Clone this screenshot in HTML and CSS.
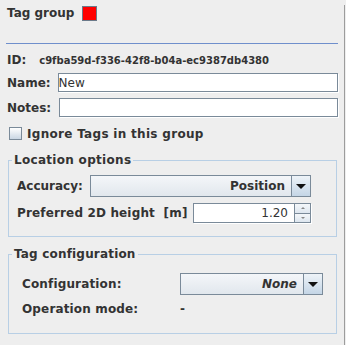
FILE: index.html
```html
<!DOCTYPE html>
<html lang="en">
<head>
  <meta charset="UTF-8">
  <title>Tag group</title>
  <link rel="stylesheet" href="styles.css">
</head>
<body>
<div class="panel">
  <div class="head">
    <span>Tag group</span>
    <span class="swatch"></span>
  </div>
  <div class="sep"></div>

  <div class="id-row">
    <span>ID:</span>
    <span class="uuid">c9fba59d-f336-42f8-b04a-ec9387db4380</span>
  </div>

  <div class="field-row name-row">
    <label for="name">Name:</label>
    <input id="name" class="text" type="text" value="New">
  </div>
  <div class="field-row notes-row">
    <label for="notes">Notes:</label>
    <input id="notes" class="text" type="text">
  </div>

  <label class="check"><span class="box"></span>Ignore Tags in this group</label>

  <fieldset class="group location">
    <legend>Location options</legend>
    <div class="group-body">
      <div class="opt-row">
        <span>Accuracy:</span>
        <div class="combo accuracy">
          <span class="combo-value">Position</span>
          <span class="combo-btn"><span class="arrow"></span></span>
        </div>
      </div>
      <div class="opt-row height-row">
        <span class="wide">Preferred 2D height&nbsp; [m]</span>
        <div class="spinner">
          <span class="spin-value">1.20</span>
          <span class="spin-btns">
            <span class="spin-up"><span class="tiny up"></span></span>
            <span class="spin-down"><span class="tiny down"></span></span>
          </span>
        </div>
      </div>
    </div>
  </fieldset>

  <fieldset class="group tagconf">
    <legend>Tag configuration</legend>
    <div class="group-body conf-grid">
      <span class="wide">Configuration:</span>
      <div class="combo config">
        <span class="combo-value none">None</span>
        <span class="combo-btn"><span class="arrow"></span></span>
      </div>
      <span class="wide">Operation mode:</span>
      <span>-</span>
    </div>
  </fieldset>
</div>
</body>
</html>
```

FILE: styles.css
```css
body {
  margin: 0;
  background: #eeeeee;
  font: bold 12px/14px "DejaVu Sans", sans-serif;
  color: #333333;
}

.panel {
  width: 345px;
  height: 345px;
  box-sizing: border-box;
  border-right: 1px solid #9c9c9c;
}

.head {
  display: flex;
  align-items: center;
  height: 16px;
  margin-top: 5px;
  padding-left: 7px;
}
.swatch {
  width: 13px;
  height: 13px;
  margin-left: 8px;
  background: #ff0000;
  border: 1px solid #6b7a8a;
}

.sep {
  height: 1px;
  margin: 22px 6px 0 6px;
  background: #6f8fcc;
}

.id-row {
  display: flex;
  align-items: baseline;
  margin-top: 9px;
  padding-left: 7px;
}
.uuid {
  font-size: 10px;
  margin-left: 13px;
}

.field-row {
  display: flex;
  align-items: center;
  padding: 0 6px 0 7px;
  gap: 7px;
}
.name-row {
  margin-top: 5px;
}
.notes-row {
  margin-top: 6px;
  gap: 8px;
}
.text {
  flex: 1;
  height: 19px;
  box-sizing: border-box;
  margin: 0;
  padding: 0 1px 0 0;
  border: 1px solid #7a8a99;
  box-shadow: 1px 1px 0 #ffffff;
  background: #ffffff;
  font: 12px "DejaVu Sans", sans-serif;
  color: #333333;
  outline: none;
}

.check {
  display: flex;
  align-items: center;
  margin-top: 10px;
  padding-left: 9px;
  height: 13px;
  letter-spacing: 0.3px;
}
.box {
  width: 11px;
  height: 11px;
  margin-right: 5px;
  border: 1px solid #7a8a99;
  background: linear-gradient(#ffffff, #c9d6e3);
}

.group {
  margin: 13px 7px 0 8px;
  padding: 0;
  border: 1px solid #b8cfe5;
  min-width: 0;
}
.group legend {
  margin-left: 3px;
  padding: 0 2px;
  line-height: 14px;
  letter-spacing: 0.3px;
}
.tagconf {
  margin-top: 10px;
}
.tagconf legend {
  letter-spacing: 0.18px;
}
.wide {
  letter-spacing: 0.15px;
}

.location .group-body {
  padding: 8px 25px 13px 8px;
}
.opt-row {
  display: flex;
  align-items: center;
  justify-content: space-between;
}
.height-row {
  margin-top: 6px;
}

.combo {
  display: flex;
  height: 22px;
  box-sizing: border-box;
  border: 1px solid #7a8a99;
  background: linear-gradient(#f4f6f9, #e1e7ed);
}
.accuracy {
  width: 221px;
}
.config {
  width: 143px;
}
.combo-value {
  flex: 1;
  text-align: right;
  padding-right: 6px;
  line-height: 20px;
}
.combo-value.none {
  font-style: italic;
}
.combo-btn {
  width: 18px;
  border-left: 1px solid #7a8a99;
  background: linear-gradient(#eef3f8, #c4d5e6);
  display: flex;
  align-items: center;
  justify-content: center;
}
.arrow {
  width: 0;
  height: 0;
  border-left: 5px solid transparent;
  border-right: 5px solid transparent;
  border-top: 5px solid #111111;
  margin-top: 1px;
}

.spinner {
  display: flex;
  width: 118px;
  height: 20px;
  box-sizing: border-box;
  border: 1px solid #7a8a99;
  box-shadow: 1px 1px 0 #ffffff;
  background: #ffffff;
}
.spin-value {
  flex: 1;
  text-align: right;
  padding-right: 6px;
  font: 12px/18px "DejaVu Sans", sans-serif;
}
.spin-btns {
  width: 15px;
  display: flex;
  flex-direction: column;
  border-left: 1px solid #7a8a99;
}
.spin-up,
.spin-down {
  flex: 1;
  display: flex;
  align-items: center;
  justify-content: center;
  background: linear-gradient(#f4f7fa, #dde6ef);
}
.spin-up {
  border-bottom: 1px solid #7a8a99;
}
.tiny {
  width: 0;
  height: 0;
  border-left: 2px solid transparent;
  border-right: 2px solid transparent;
}
.tiny.up {
  border-bottom: 2px solid #888888;
}
.tiny.down {
  border-top: 2px solid #888888;
}

.conf-grid {
  display: grid;
  grid-template-columns: 158px 143px;
  align-items: center;
  row-gap: 7px;
  padding: 12px 0 17px 13px;
}
```
